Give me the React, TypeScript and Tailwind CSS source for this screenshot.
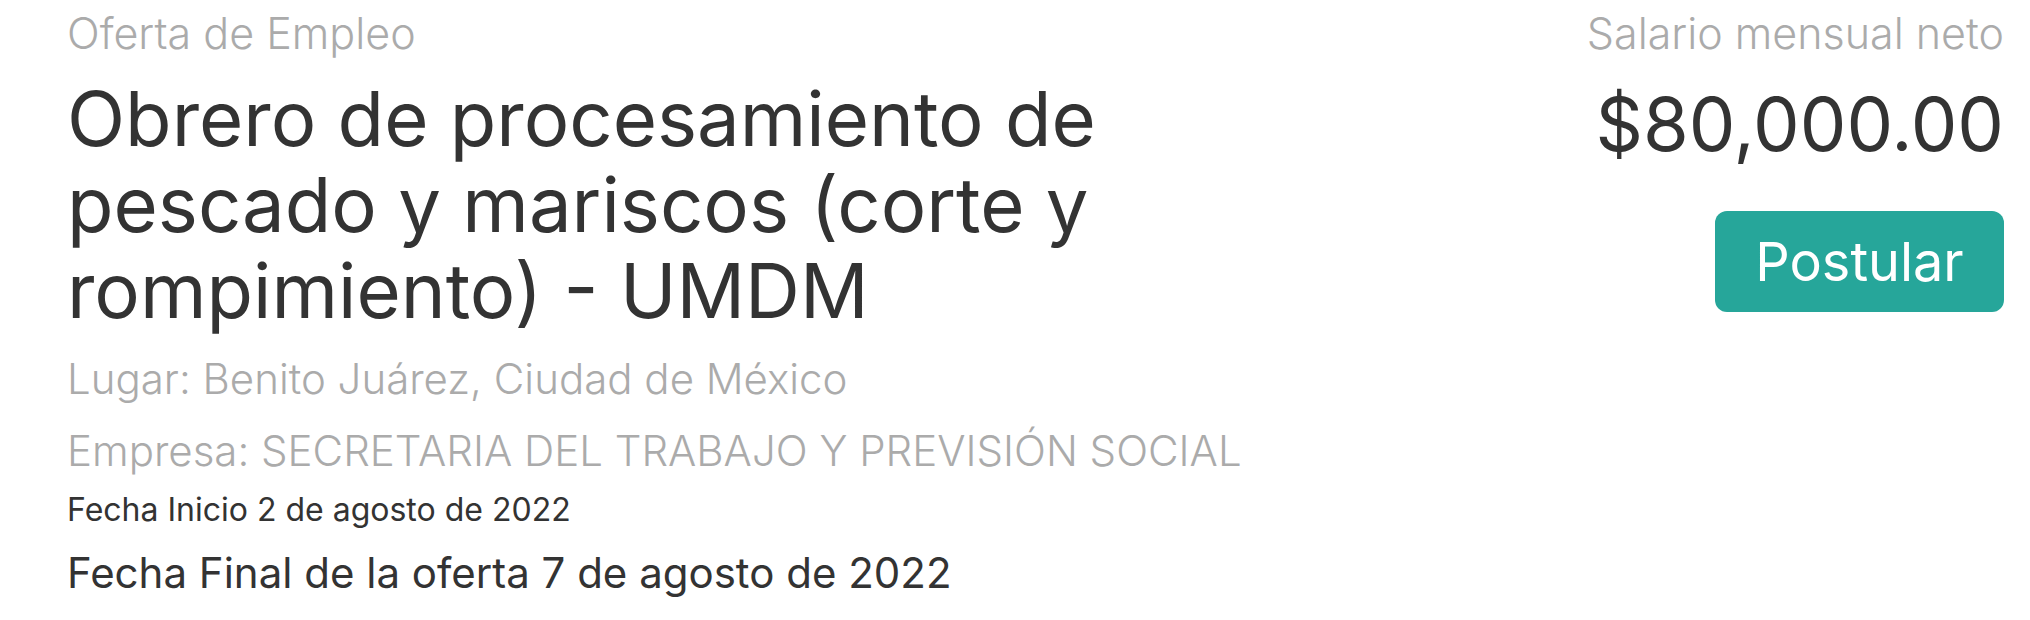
export default function App() {
  return (
    <div className="flex w-[2030px] h-[620px] bg-white justify-between pl-[67px] pr-[26px] pt-[9px] font-['Inter',sans-serif]">
      <div className="flex flex-col">
        <span className="text-[43px] font-light text-[#ababab] leading-[48px]">Oferta de Empleo</span>
        <h1 className="mt-[18px] w-[1110px] text-[76px] font-normal text-[#333333] leading-[86px]">
          Obrero de procesamiento de pescado y mariscos (corte y rompimiento) - UMDM
        </h1>
        <span className="mt-[21px] text-[42px] font-light text-[#ababab] leading-[50px]">Lugar: Benito Juárez, Ciudad de México</span>
        <span className="mt-[22px] text-[42px] font-light text-[#ababab] leading-[50px]">Empresa: SECRETARIA DEL TRABAJO Y PREVISIÓN SOCIAL</span>
        <span className="mt-[14px] text-[32px] text-[#333333] leading-[40px]">Fecha Inicio 2 de agosto de 2022</span>
        <span className="mt-[18px] text-[42px] text-[#333333] leading-[50px]">Fecha Final de la oferta 7 de agosto de 2022</span>
      </div>
      <div className="flex flex-col items-end">
        <span className="text-[43px] font-light text-[#ababab] leading-[48px]">Salario mensual neto</span>
        <span className="mt-[27px] text-[74px] text-[#333333] leading-[80px]">$80,000.00</span>
        <button className="mt-[47px] w-[289px] h-[101px] rounded-[12px] bg-[#26a69a] text-white text-[54px]">Postular</button>
      </div>
    </div>
  );
}
